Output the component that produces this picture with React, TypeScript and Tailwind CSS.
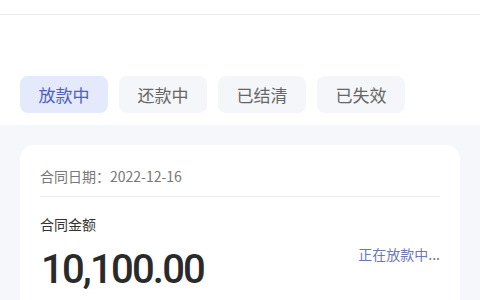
const tabs = ["放款中", "还款中", "已结清", "已失效"];

export default function App() {
  return (
    <div
      className="w-[480px] h-[300px] overflow-hidden bg-[#f5f7fa]"
      style={{ fontFamily: '"Noto Sans CJK SC", "Noto Sans", sans-serif' }}
    >
      <div className="bg-white">
        <div className="h-[15px] border-b border-[#ececec]" />
        <div className="h-[110px] flex items-end pb-[12px] px-[20px] gap-[11px]">
          {tabs.map((t, i) => (
            <div
              key={t}
              className={
                i === 0
                  ? "w-[88px] h-[37px] rounded-[8px] flex items-center justify-center text-[17px] bg-[#e4e9fc] text-[#4d5fbf]"
                  : "w-[88px] h-[37px] rounded-[8px] flex items-center justify-center text-[17px] bg-[#f5f6f9] text-[#666]"
              }
            >
              {t}
            </div>
          ))}
        </div>
      </div>
      <div className="px-[20px] pt-[20px]">
        <div className="bg-white rounded-[14px] px-[20px] pt-[21px] pb-[20px]">
          <div className="text-[14px] text-[#777] leading-[20px] pb-[10px] border-b border-[#ececec]">
            合同日期：2022-12-16
          </div>
          <div className="pt-[17px] text-[14px] text-[#333] leading-[20px]">合同金额</div>
          <div className="flex items-start justify-between">
            <div
              className="text-[40px] font-medium text-[#2a2a2a] leading-[48px] tracking-[-1.8px] mt-[12px] ml-[1px]"
              style={{ fontFamily: "Roboto, sans-serif" }}
            >
              10,100.00
            </div>
            <div className="text-[14px] text-[#6b77b8] leading-[20px] mt-[10px]">正在放款中...</div>
          </div>
        </div>
      </div>
    </div>
  );
}
